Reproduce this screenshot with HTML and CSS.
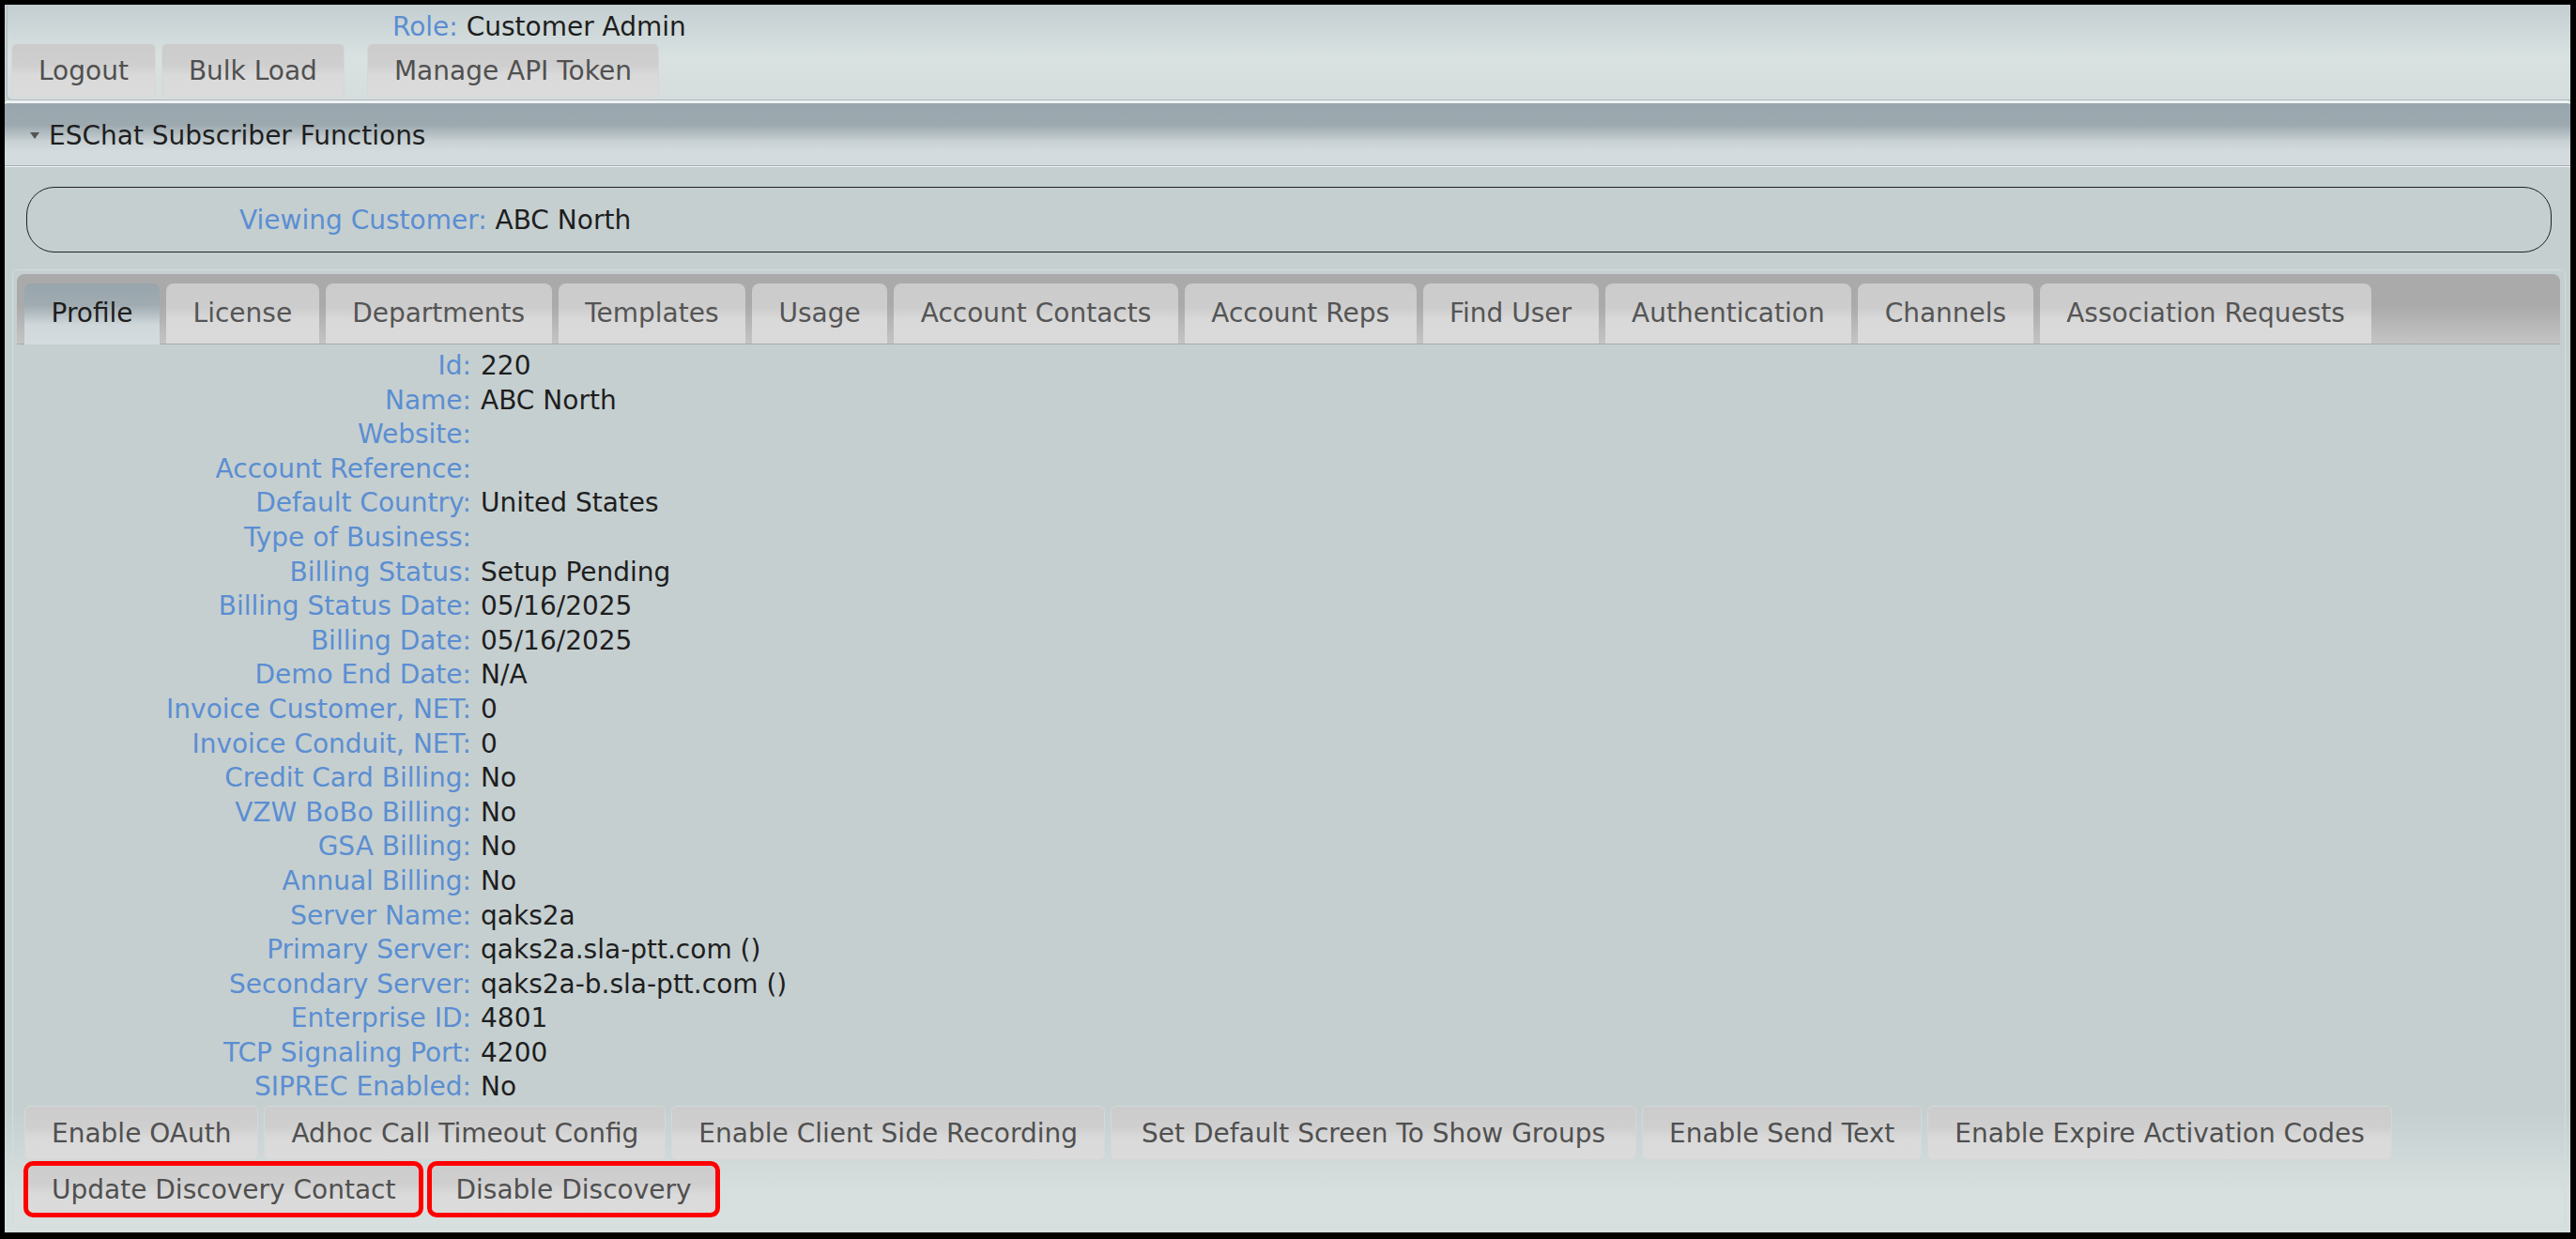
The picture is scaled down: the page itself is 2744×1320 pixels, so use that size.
FILE: index.html
```html
<!DOCTYPE html>
<html lang="en">
<head>
    <meta charset="UTF-8">
    <title>ESChat Subscriber Functions</title>
    <link rel="stylesheet" href="styles.css">
</head>
<body>
    <div class="frame">
        <div class="topbar">
            <div class="role"><span class="label">Role:</span> Customer Admin</div>
            <div class="top-buttons">
                <button class="btn">Logout</button>
                <button class="btn">Bulk Load</button>
                <button class="btn btn-spaced">Manage API Token</button>
            </div>
        </div>

        <div class="section-head">
            <span class="caret"></span>ESChat Subscriber Functions
        </div>

        <div class="content">
            <div class="viewing">
                <span class="label">Viewing Customer:</span> ABC North
            </div>

            <div class="tabs">
                <ul class="tab-nav">
                    <li class="tab active">Profile</li>
                    <li class="tab">License</li>
                    <li class="tab">Departments</li>
                    <li class="tab">Templates</li>
                    <li class="tab">Usage</li>
                    <li class="tab">Account Contacts</li>
                    <li class="tab">Account Reps</li>
                    <li class="tab">Find User</li>
                    <li class="tab">Authentication</li>
                    <li class="tab">Channels</li>
                    <li class="tab">Association Requests</li>
                </ul>

                <div class="tab-panel">
                    <div class="profile">
                        <div class="label">Id:</div><div>220</div>
                        <div class="label">Name:</div><div>ABC North</div>
                        <div class="label">Website:</div><div></div>
                        <div class="label">Account Reference:</div><div></div>
                        <div class="label">Default Country:</div><div>United States</div>
                        <div class="label">Type of Business:</div><div></div>
                        <div class="label">Billing Status:</div><div>Setup Pending</div>
                        <div class="label">Billing Status Date:</div><div>05/16/2025</div>
                        <div class="label">Billing Date:</div><div>05/16/2025</div>
                        <div class="label">Demo End Date:</div><div>N/A</div>
                        <div class="label">Invoice Customer, NET:</div><div>0</div>
                        <div class="label">Invoice Conduit, NET:</div><div>0</div>
                        <div class="label">Credit Card Billing:</div><div>No</div>
                        <div class="label">VZW BoBo Billing:</div><div>No</div>
                        <div class="label">GSA Billing:</div><div>No</div>
                        <div class="label">Annual Billing:</div><div>No</div>
                        <div class="label">Server Name:</div><div>qaks2a</div>
                        <div class="label">Primary Server:</div><div>qaks2a.sla-ptt.com ()</div>
                        <div class="label">Secondary Server:</div><div>qaks2a-b.sla-ptt.com ()</div>
                        <div class="label">Enterprise ID:</div><div>4801</div>
                        <div class="label">TCP Signaling Port:</div><div>4200</div>
                        <div class="label">SIPREC Enabled:</div><div>No</div>
                    </div>

                    <div class="actions first">
                        <button class="btn">Enable OAuth</button>
                        <button class="btn">Adhoc Call Timeout Config</button>
                        <button class="btn">Enable Client Side Recording</button>
                        <button class="btn btn-wide">Set Default Screen To Show Groups</button>
                        <button class="btn">Enable Send Text</button>
                        <button class="btn">Enable Expire Activation Codes</button>
                    </div>
                    <div class="actions">
                        <button class="btn marked">Update Discovery Contact</button>
                        <button class="btn marked">Disable Discovery</button>
                    </div>
                </div>
            </div>
        </div>
    </div>
</body>
</html>
```

FILE: styles.css
```css
html, body {
    margin: 0;
    padding: 0;
    background-color: #000000;
}
body {
    font-family: "DejaVu Sans", Verdana, sans-serif;
    font-size: 28px;
    color: #1e1e1e;
}
.frame {
    box-sizing: border-box;
    height: 1320px;
    border-style: solid;
    border-color: #000000;
    border-width: 5px 6px 7px 5px;
    background: linear-gradient(to bottom, #c5cfd0 0%, #c5cfd0 90%, #d8e0df 97%, #d8e0df 100%);
    overflow: hidden;
}
.label {
    color: #5b8ed2;
}
.topbar {
    height: 102px;
    box-sizing: border-box;
    margin-left: 2px;
    padding: 6px 0 2px 4px;
    background: linear-gradient(to bottom, #c4ced1 0%, #d9e2e1 55%, #d5dedd 100%);
    border-left: 1px solid #b4bdc0;
    border-bottom: 1px solid #aeb8bb;
    border-radius: 0 0 0 6px;
}
.role {
    line-height: 35px;
    padding-left: 406px;
}
.top-buttons {
    display: flex;
    gap: 6px;
}
.btn {
    font-family: "DejaVu Sans", Verdana, sans-serif;
    font-size: 28px;
    color: #505050;
    height: 58px;
    padding: 0 28px;
    background: linear-gradient(to bottom, #cccccc 0%, #cfcfcf 40%, #dadada 60%, #dbdbdb 100%);
    border: 1px solid #d4d8d8;
    border-radius: 6px;
    white-space: nowrap;
    cursor: pointer;
}
.btn-spaced {
    margin-left: 18px;
}
.btn-wide {
    padding: 0 32px;
}
.section-head {
    height: 70px;
    box-sizing: border-box;
    padding: 4px 0 0 27px;
    line-height: 62px;
    border-top: 3px solid #eef2f2;
    border-bottom: 1px solid #a5aeb2;
    border-radius: 4px 4px 0 0;
    background: linear-gradient(to bottom, #9aa6ad 0%, #9ca9af 35%, #c9d1d4 62%, #d4dbde 78%, #d4dbde 100%);
    color: #1e1e1e;
}
.caret {
    display: inline-block;
    width: 0;
    height: 0;
    border-left: 5px solid transparent;
    border-right: 5px solid transparent;
    border-top: 7px solid #555555;
    margin-right: 10px;
    vertical-align: 6px;
}
.content {
    border-top: 1px solid #f0f4f4;
    padding: 21px 5px 0 8px;
}
.viewing {
    height: 70px;
    box-sizing: border-box;
    margin: 0 15px 18px 15px;
    border: 1px solid #222222;
    border-radius: 30px;
    line-height: 70px;
    padding-left: 226px;
}
.tabs {
    height: 1021px;
    box-sizing: border-box;
    border: 1px solid #d3dbdb;
    border-radius: 6px;
    padding: 4px 5px 0 4px;
}
.tab-nav {
    list-style: none;
    margin: 0;
    padding: 10px 0 0 8px;
    height: 75px;
    box-sizing: border-box;
    display: flex;
    gap: 7px;
    border-radius: 8px 8px 0 0;
    border-bottom: 1px solid #a8a8a8;
    background: linear-gradient(to bottom, #aaaaaa 0%, #aaaaaa 45%, #c4c4c4 100%);
}
.tab {
    height: 64px;
    line-height: 64px;
    padding: 0 28.5px;
    border-radius: 8px 8px 0 0;
    color: #555555;
    white-space: nowrap;
    background: linear-gradient(to bottom, #cbcbcb 0%, #cdcdcd 40%, #d9d9d9 60%, #dadada 100%);
}
.tab.active {
    height: 65px;
    margin-bottom: -1px;
    color: #1e1e1e;
    background: linear-gradient(to bottom, #98a5ac 0%, #9fabb1 35%, #cfd7da 68%, #d5dcdf 100%);
}
.tab-panel {
    padding: 5px 0 0 0;
}
.profile {
    display: grid;
    grid-template-columns: 484px auto;
    grid-auto-rows: 36.6px;
    column-gap: 10px;
    line-height: 36.6px;
    white-space: nowrap;
}
.profile .label {
    text-align: right;
}
.actions {
    display: flex;
    gap: 6px;
    padding-left: 8px;
    margin-top: 2px;
}
.actions.first {
    margin-top: 1px;
}
.marked {
    outline: 5px solid #ff0000;
    outline-offset: -4px;
    border-radius: 9px;
}
```
